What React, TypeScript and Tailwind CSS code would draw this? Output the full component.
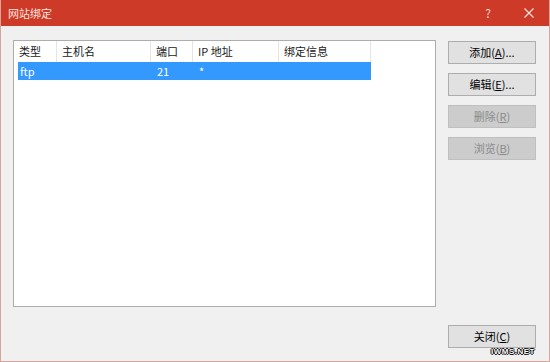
import React from 'react'

type Col = { label: string; width: number }

const columns: Col[] = [
  { label: '类型', width: 43 },
  { label: '主机名', width: 94 },
  { label: '端口', width: 42 },
  { label: 'IP 地址', width: 86 },
  { label: '绑定信息', width: 92 },
]

const rows = [['ftp', '', '21', '*', '']]

function DlgButton({ text, hot, rest, disabled }: { text: string; hot: string; rest: string; disabled?: boolean }) {
  return (
    <button
      className={
        disabled
          ? 'w-[88px] h-[23px] border border-[#bfbfbf] bg-[#cccccc] text-[#8a8a8a] text-[11px] leading-none flex items-center justify-center'
          : 'w-[88px] h-[23px] border border-[#adadad] bg-[#e1e1e1] text-[#000] text-[11px] leading-none flex items-center justify-center'
      }
    >
      {text}(<span className="underline">{hot}</span>){rest}
    </button>
  )
}

export default function App() {
  return (
    <div
      className="relative w-[550px] h-[362px] flex flex-col bg-[#f0f0f0] border-x border-b border-[#d9a49b] overflow-hidden"
      style={{ fontFamily: '"Noto Sans CJK SC", "Noto Sans", sans-serif' }}
    >
      {/* title bar */}
      <div className="h-[26px] -mx-px bg-[#cd3a28] flex items-center text-white shrink-0">
        <span className="pl-[8px] text-[11px] text-[#fbe3df]">网站绑定</span>
        <span className="ml-auto mr-[33px] text-[12px] text-[#f5d6d1]">?</span>
        <svg width="10" height="10" viewBox="0 0 10 10" className="mr-[16px]">
          <path d="M0.5 0.5 L9.5 9.5 M9.5 0.5 L0.5 9.5" stroke="#fbe3df" strokeWidth="1.2" />
        </svg>
      </div>

      <div className="flex-1 flex flex-col pl-[12px] pr-[13px] pt-[14px]">
        <div className="flex gap-[12px]">
          {/* list view */}
          <div className="w-[424px] h-[267px] border border-[#adadad] bg-white">
            <div className="flex h-[21px] text-[11px] text-[#1a1a1a]">
              {columns.map((c) => (
                <div
                  key={c.label}
                  className="h-full flex items-center border-r border-[#e5e5e5] pl-[5px]"
                  style={{ width: c.width }}
                >
                  {c.label}
                </div>
              ))}
            </div>
            {rows.map((r, i) => (
              <div key={i} className="ml-[4px] w-[353px] h-[18px] bg-[#3399ff] flex text-[11px] text-white">
                {r.map((cell, j) => (
                  <div
                    key={j}
                    className="h-full flex items-center"
                    style={{ width: j === 0 ? columns[0].width - 4 : columns[j].width, paddingLeft: j === 0 ? 2 : 6 }}
                  >
                    {cell}
                  </div>
                ))}
              </div>
            ))}
          </div>

          {/* side buttons */}
          <div className="flex flex-col gap-[9px] pt-px">
            <DlgButton text="添加" hot="A" rest="..." />
            <DlgButton text="编辑" hot="E" rest="..." />
            <DlgButton text="删除" hot="R" rest="" disabled />
            <DlgButton text="浏览" hot="B" rest="" disabled />
          </div>
        </div>

        <div className="flex justify-end mt-[18px]">
          <DlgButton text="关闭" hot="C" rest="" />
        </div>
      </div>

      <span
        className="absolute right-[14px] bottom-[5px] text-[8px] font-bold leading-none text-white tracking-[0.5px]"
        style={{ fontFamily: '"Liberation Sans", sans-serif', textShadow: '1px 0 #000, -1px 0 #000, 0 1px #000, 0 -1px #000' }}
      >
        IWMS.NET
      </span>
    </div>
  )
}
